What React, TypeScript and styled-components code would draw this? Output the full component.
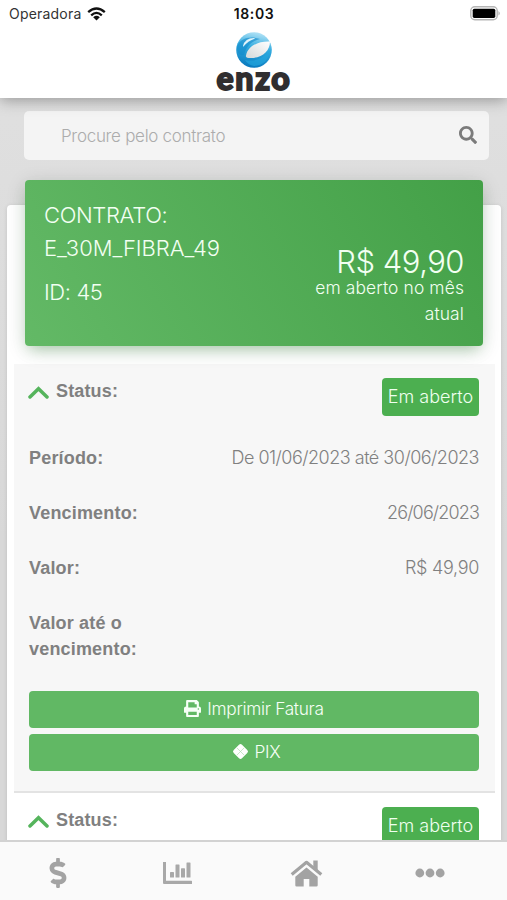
import React from 'react';
import styled, { createGlobalStyle } from 'styled-components';
import { FaSearch, FaPrint, FaDollarSign } from 'react-icons/fa';

const GlobalStyle = createGlobalStyle`
  * { box-sizing: border-box; }
  body { margin: 0; background: #dedede; }
`;

const Screen = styled.div`
  width: 507px;
  height: 900px;
  overflow: hidden;
  display: flex;
  flex-direction: column;
  background: linear-gradient(#e1e1e1, #d8d8d8 60%);
  font-family: Inter, 'Liberation Sans', sans-serif;
  font-weight: 300;
  color: #808080;
`;

const Header = styled.header`
  flex: none;
  height: 98px;
  background: #fff;
  box-shadow: 0 2px 14px rgba(0, 0, 0, 0.34);
  z-index: 2;
`;

const StatusBar = styled.div`
  display: grid;
  grid-template-columns: 1fr auto 1fr;
  align-items: center;
  height: 27px;
  padding: 0 6px 0 9px;
  color: #111;
`;

const Carrier = styled.div`
  display: flex;
  align-items: center;
  gap: 6px;
  font-size: 14px;
  font-weight: 400;
  letter-spacing: 0.2px;
  color: #333;
`;

const Clock = styled.div`
  margin-right: 2px;
  font-size: 14px;
  font-weight: 600;
  letter-spacing: 0.6px;
`;

const Battery = styled.div`
  display: flex;
  justify-content: flex-end;
`;

const Logo = styled.div`
  display: flex;
  flex-direction: column;
  align-items: center;
  padding-top: 5px;
  svg { display: block; }
`;

const Content = styled.main`
  flex: 1;
  min-height: 0;
  overflow: hidden;
  padding: 13px 6px 0 7px;
`;

const Search = styled.div`
  display: flex;
  align-items: center;
  justify-content: space-between;
  height: 49px;
  margin: 0 12px 0 17px;
  padding: 0 12px 0 37px;
  border-radius: 5px;
  background: #f4f4f4;
  color: #7b7b7b;
  svg { margin-top: -2px; }
`;

const Placeholder = styled.span`
  font-size: 17px;
  letter-spacing: -0.3px;
  color: #acacac;
`;

const Card = styled.section`
  margin-top: 45px;
  height: 700px;
  padding: 0 6px 0 7px;
  border-radius: 4px;
  background: #fff;
  box-shadow: 0 1px 4px rgba(0, 0, 0, 0.12);
`;

const Contract = styled.div`
  position: relative;
  top: -25px;
  display: flex;
  justify-content: space-between;
  height: 166px;
  margin: 0 12px -7px 11px;
  padding: 19px 19px 0 19px;
  border-radius: 4px;
  background: linear-gradient(60deg, #63b966, #43a047);
  box-shadow: 0 4px 20px rgba(0, 0, 0, 0.14), 0 7px 14px -5px rgba(76, 175, 80, 0.4);
  color: #f2fff2;
`;

const ContractInfo = styled.div`
  display: flex;
  flex-direction: column;
  font-size: 22px;
  line-height: 33px;
`;

const Line = styled.div<{ $spacing: number; $gap?: number }>`
  letter-spacing: ${p => p.$spacing}px;
  margin-top: ${p => p.$gap ?? 0}px;
  white-space: nowrap;
`;

const Amount = styled.div`
  width: 160px;
  padding-top: 45px;
  text-align: right;
`;

const Total = styled.div`
  font-size: 31px;
  line-height: 36px;
  letter-spacing: -0.5px;
`;

const Caption = styled.div`
  font-size: 17.4px;
  line-height: 26px;
  margin-top: -5px;
  letter-spacing: 0.13px;
`;

const Invoice = styled.article<{ $shaded?: boolean }>`
  height: 429px;
  padding: 14px 16px 0 15px;
  background: ${p => (p.$shaded ? '#f7f7f7' : '#fff')};
  border-bottom: 2px solid #e3e3e3;
`;

const InvoiceHead = styled.div`
  display: flex;
  justify-content: space-between;
  height: 67px;
`;

const StatusLabel = styled.div`
  display: flex;
  height: 26px;
  align-items: center;
  gap: 7px;
  font: bold 18px/26px 'Liberation Sans', sans-serif;
  letter-spacing: 0.15px;
  svg { margin: 3px 0 0 -1px; }
`;

const Badge = styled.div`
  width: 97px;
  height: 38px;
  border-radius: 4px;
  background: #4caf50;
  color: #efffef;
  font-size: 18px;
  line-height: 37px;
  letter-spacing: 0;
  text-align: center;
  white-space: nowrap;
`;

const Field = styled.div<{ $height?: number }>`
  display: flex;
  justify-content: space-between;
  height: ${p => p.$height ?? 55}px;
  font-size: 18px;
  line-height: 26px;
`;

const Label = styled.div`
  width: 140px;
  font: bold 18px/26px 'Liberation Sans', sans-serif;
  letter-spacing: 0.18px;
`;

const Value = styled.div<{ $spacing: number }>`
  letter-spacing: ${p => p.$spacing}px;
  white-space: nowrap;
`;

const Action = styled.button`
  display: flex;
  align-items: center;
  justify-content: center;
  gap: 6px;
  width: 100%;
  height: 37px;
  margin: 0 0 6px;
  padding: 0 0 2px;
  border: 0;
  border-radius: 4px;
  background: #61b864;
  color: #f6fff6;
  font: 300 17.3px/24px Inter, sans-serif;
  letter-spacing: -0.3px;
`;

const Nav = styled.nav`
  flex: none;
  display: grid;
  grid-template-columns: 116px 123px 134px 114px;
  align-items: center;
  height: 60px;
  padding-top: 4px;
  border-top: 2px solid #d2d2d2;
  background: #fafafa;
  color: #a3a3a3;
  z-index: 2;
`;

const NavItem = styled.div`
  display: flex;
  justify-content: center;
`;

function Wifi() {
  return (
    <svg width="19" height="14" viewBox="0 0 19 14" fill="none" stroke="#111" strokeWidth="2.3">
      <path d="M1.2 5.2Q9.5-2.3 17.8 5.2M4.2 8.3Q9.5 3.5 14.8 8.3" />
      <path d="M6.2 10.2Q9.5 7.5 12.8 10.2L9.5 13.6Z" fill="#111" stroke="none" />
    </svg>
  );
}

function BatteryIcon() {
  return (
    <svg width="31" height="15" viewBox="0 0 31 15">
      <rect x=".8" y=".8" width="26.4" height="13" rx="4" fill="#fff" stroke="#b5b5b5" strokeWidth="1.4" />
      <rect x="2.7" y="2.7" width="22.6" height="9.2" rx="1.6" fill="#000" />
      <path d="M28.5 5Q31 7.3 28.5 9.6Z" fill="#aaa" />
    </svg>
  );
}

function EnzoMark() {
  return (
    <svg width="36" height="36" viewBox="0 0 36 36">
      <defs>
        <linearGradient id="ball" x1="0.6" y1="0" x2="0.4" y2="1">
          <stop offset="0" stopColor="#b4e3f6" />
          <stop offset=".42" stopColor="#35ade0" />
          <stop offset="1" stopColor="#0878bd" />
        </linearGradient>
        <linearGradient id="leaf" x1="1" y1="0" x2="0" y2="1">
          <stop offset="0" stopColor="#fff" />
          <stop offset="1" stopColor="#d4d8d9" />
        </linearGradient>
      </defs>
      <circle cx="18" cy="18" r="17.8" fill="url(#ball)" />
      <path d="M1 15C4 5 16 4 24 7C15 9 10 15 8 23C3 24 1 20 1 15Z" fill="#128bcc" opacity=".6" />
      <path d="M7 14Q9 6 18 6Q20 6 18 7Q12 9 8 14Q7 15 7 14Z" fill="#e2f4fb" />
      <path d="M10 23.5C12 14 22 9 34 9.5C34 19 26 26 15 26Q9 26 10 23.5Z" fill="url(#leaf)" />
      <path d="M9 28Q24 31 34 18Q32 33 18 34Q12 33 9 28Z" fill="#23a8df" opacity=".65" />
    </svg>
  );
}

const Wordmark = styled.div`
  margin: -7px 0 0 1px;
  color: #302e30;
  font: 900 32px/34px Lato, sans-serif;
  letter-spacing: 1.7px;
  -webkit-text-stroke: 1.8px #302e30;
`;

function Chevron() {
  return (
    <svg width="21" height="14" viewBox="0 0 21 14" fill="none" stroke="#55b45c" strokeWidth="3.5" strokeLinecap="round" strokeLinejoin="miter">
      <path d="M2 11L10.5 2.8L19 11" />
    </svg>
  );
}

const PixSvg = styled.svg`
  margin-left: 4px;
`;

function PixIcon() {
  return (
    <PixSvg width="17" height="17" viewBox="0 0 16 16">
      <rect x="2.5" y="2.5" width="11" height="11" rx="2" transform="rotate(45 8 8)" fill="#fff" />
      <path d="M4.6 4.6L11.4 11.4M11.4 4.6L4.6 11.4" fill="none" stroke="#a9d9aa" strokeWidth=".6" />
    </PixSvg>
  );
}

function ChartIcon() {
  return (
    <svg width="31" height="24" viewBox="0 0 31 24" fill="#a8a8a8">
      <path d="M1 1H4V19.8H29.5Q30 19.8 30 20.5V23H2Q1 23 1 22Z" />
      <rect x="8" y="11" width="4" height="5.6" rx=".6" />
      <rect x="13.5" y="3.5" width="4" height="13.1" rx=".6" />
      <rect x="19" y="7.2" width="4" height="9.4" rx=".6" />
      <rect x="24.5" y="1.5" width="4" height="15.1" rx=".6" />
    </svg>
  );
}

function HomeIcon() {
  return (
    <svg width="33" height="27" viewBox="0 0 33 27" fill="#a3a3a3">
      <path d="M16.5 7.6L5.3 16.8V25.2Q5.3 26.5 6.6 26.5H13.7V19H19.3V26.5H26.4Q27.7 26.5 27.7 25.2V16.8Z" />
      <path d="M23.3 .5H27.7V11L23.3 7.5Z" />
      <path d="M1.7 14.4L16.5 2.3L31.3 14.4" fill="none" stroke="#a3a3a3" strokeWidth="3.2" strokeLinejoin="round" />
    </svg>
  );
}

function Dots() {
  return (
    <svg width="30" height="10" viewBox="0 0 30 10" fill="#a3a3a3">
      <circle cx="4.8" cy="5" r="4.4" />
      <circle cx="15" cy="5" r="4.4" />
      <circle cx="25.2" cy="5" r="4.4" />
    </svg>
  );
}

function InvoiceStatus() {
  return (
    <InvoiceHead>
      <StatusLabel><Chevron />Status:</StatusLabel>
      <Badge>Em aberto</Badge>
    </InvoiceHead>
  );
}

export default function App() {
  return (
    <Screen>
      <GlobalStyle />
      <Header>
        <StatusBar>
          <Carrier>Operadora <Wifi /></Carrier>
          <Clock>18:03</Clock>
          <Battery><BatteryIcon /></Battery>
        </StatusBar>
        <Logo>
          <EnzoMark />
          <Wordmark>enzo</Wordmark>
        </Logo>
      </Header>
      <Content>
        <Search>
          <Placeholder>Procure pelo contrato</Placeholder>
          <FaSearch size={18} />
        </Search>
        <Card>
          <Contract>
            <ContractInfo>
              <Line $spacing={-0.35}>CONTRATO:</Line>
              <Line $spacing={-0.05}>E_30M_FIBRA_49</Line>
              <Line $spacing={-0.4} $gap={11}>ID: 45</Line>
            </ContractInfo>
            <Amount>
              <Total>R$ 49,90</Total>
              <Caption>em aberto no mês atual</Caption>
            </Amount>
          </Contract>
          <Invoice $shaded>
            <InvoiceStatus />
            <Field><Label>Período:</Label><Value $spacing={-0.5}>De 01/06/2023 até 30/06/2023</Value></Field>
            <Field><Label>Vencimento:</Label><Value $spacing={-0.85}>26/06/2023</Value></Field>
            <Field><Label>Valor:</Label><Value $spacing={-0.3}>R$ 49,90</Value></Field>
            <Field $height={81}><Label>Valor até o vencimento:</Label></Field>
            <Action><FaPrint size={17} />Imprimir Fatura</Action>
            <Action><PixIcon />PIX</Action>
          </Invoice>
          <Invoice>
            <InvoiceStatus />
          </Invoice>
        </Card>
      </Content>
      <Nav>
        <NavItem><FaDollarSign size={30} /></NavItem>
        <NavItem><ChartIcon /></NavItem>
        <NavItem><HomeIcon /></NavItem>
        <NavItem><Dots /></NavItem>
      </Nav>
    </Screen>
  );
}
